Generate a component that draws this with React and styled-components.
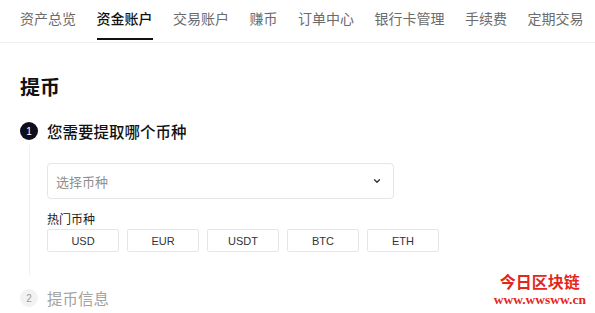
import styled, { createGlobalStyle } from 'styled-components';

const GlobalStyle = createGlobalStyle`
    html, body {
        margin: 0;
        padding: 0;
        background: #ffffff;
    }
    body {
        font-family: "Noto Sans CJK SC", "Liberation Sans", sans-serif;
        color: #121212;
    }
`;

const tabs = ['资产总览', '资金账户', '交易账户', '赚币', '订单中心', '银行卡管理', '手续费', '定期交易'];
const hotCoins = ['USD', 'EUR', 'USDT', 'BTC', 'ETH'];

export default function App() {
    return (
        <Page>
            <GlobalStyle />
            <Nav>
                {tabs.map((tab) => (
                    <Tab key={tab} $active={tab === '资金账户'}>{tab}</Tab>
                ))}
            </Nav>
            <Content>
                <Title>提币</Title>

                <StepHeader>
                    <StepNumber $active>1</StepNumber>
                    <StepTitle $active>您需要提取哪个币种</StepTitle>
                </StepHeader>
                <StepBody>
                    <Select>
                        <Placeholder>选择币种</Placeholder>
                        <svg width="10" height="10" viewBox="0 0 10 10">
                            <path d="M2.5 3.8 L5 6.2 L7.5 3.8" fill="none" stroke="#333" strokeWidth="1.3" strokeLinecap="round" strokeLinejoin="round" />
                        </svg>
                    </Select>
                    <Label>热门币种</Label>
                    <ChipRow>
                        {hotCoins.map((coin) => (
                            <Chip key={coin}>{coin}</Chip>
                        ))}
                    </ChipRow>
                </StepBody>

                <StepHeader $next>
                    <StepNumber>2</StepNumber>
                    <StepTitle>提币信息</StepTitle>
                </StepHeader>
            </Content>

            <Watermark>
                <WatermarkName>今日区块链</WatermarkName>
                <WatermarkUrl>www.wwsww.cn</WatermarkUrl>
            </Watermark>
        </Page>
    );
}

const Page = styled.div`
    position: relative;
    width: 595px;
    height: 313px;
    overflow: hidden;
`;

const Nav = styled.div`
    display: flex;
    gap: 20.5px;
    height: 42px;
    padding: 0 20px;
    border-bottom: 1px solid #efefef;
    white-space: nowrap;
`;

const Tab = styled.div`
    position: relative;
    padding-top: 8px;
    font-size: 14px;
    line-height: 20px;
    color: ${(p) => (p.$active ? '#121212' : '#6b6b6b')};
    font-weight: ${(p) => (p.$active ? 500 : 400)};
    &::after {
        content: '';
        display: ${(p) => (p.$active ? 'block' : 'none')};
        position: absolute;
        left: 0;
        right: 0;
        bottom: 2px;
        height: 2px;
        background: #121212;
    }
`;

const Content = styled.div`
    padding: 0 20px;
`;

const Title = styled.h1`
    margin: 30px 0 0;
    font-size: 20px;
    line-height: 28px;
    font-weight: 600;
    color: #121212;
`;

const StepHeader = styled.div`
    display: flex;
    align-items: center;
    gap: 9px;
    height: 20px;
    margin-top: ${(p) => (p.$next ? '13px' : '20px')};
`;

const StepNumber = styled.div`
    width: 18px;
    height: 18px;
    border-radius: 50%;
    display: flex;
    align-items: center;
    justify-content: center;
    font-family: "Liberation Sans", sans-serif;
    font-size: 10px;
    background: ${(p) => (p.$active ? '#0d0d1e' : '#f2f2f2')};
    color: ${(p) => (p.$active ? '#ffffff' : '#9a9a9a')};
`;

const StepTitle = styled.div`
    font-size: 15.5px;
    line-height: 20px;
    font-weight: ${(p) => (p.$active ? 500 : 400)};
    color: ${(p) => (p.$active ? '#121212' : '#a3a3a3')};
`;

const StepBody = styled.div`
    margin: 4px 0 0 9px;
    padding: 18px 0 23px 17px;
    border-left: 1px solid #efefef;
`;

const Select = styled.div`
    box-sizing: border-box;
    width: 347px;
    height: 36px;
    display: flex;
    align-items: center;
    justify-content: space-between;
    padding: 0 11px 0 8px;
    border: 1px solid #e6e6e6;
    border-radius: 4px;
`;

const Placeholder = styled.span`
    font-size: 13px;
    color: #8f8f8f;
`;

const Label = styled.div`
    margin-top: 12px;
    font-size: 12px;
    line-height: 16px;
    color: #222;
`;

const ChipRow = styled.div`
    display: flex;
    gap: 8px;
    margin-top: 2px;
`;

const Chip = styled.div`
    box-sizing: border-box;
    width: 72px;
    height: 23px;
    display: flex;
    align-items: center;
    justify-content: center;
    border: 1px solid #e6e6e6;
    border-radius: 2px;
    font-family: "Liberation Sans", sans-serif;
    font-size: 11px;
    color: #333;
`;

const Watermark = styled.div`
    position: absolute;
    right: 9px;
    bottom: 7px;
    display: flex;
    flex-direction: column;
    align-items: center;
    gap: 4px;
    color: #e3261b;
`;

const WatermarkName = styled.div`
    font-size: 16px;
    line-height: 18px;
    font-weight: 700;
`;

const WatermarkUrl = styled.div`
    font-family: "Liberation Serif", serif;
    font-size: 13.5px;
    line-height: 12px;
    font-weight: 700;
`;
